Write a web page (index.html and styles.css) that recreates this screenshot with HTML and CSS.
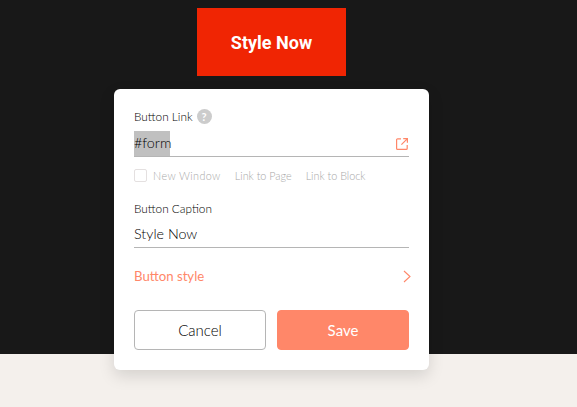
FILE: index.html
```html
<!DOCTYPE html>
<html lang="en">
<head>
    <meta charset="UTF-8">
    <title>Button settings</title>
    <link rel="stylesheet" href="styles.css">
</head>
<body>
    <section class="hero">
        <a class="hero-button">Style Now</a>
    </section>
    <section class="footer-band"></section>

    <div class="popup">
        <div class="label-row">
            <span class="label">Button Link</span>
            <span class="help">?</span>
        </div>
        <div class="field">
            <span class="selected">#form</span>
            <svg class="open-icon" width="12" height="12" viewBox="0 0 12 12" fill="none" stroke="#ff8769" stroke-width="1.2">
                <path d="M5 .8H1.6a1 1 0 0 0-1 1v8.6a1 1 0 0 0 1 1h8.6a1 1 0 0 0 1-1V7"/>
                <path d="M7.2.6h4.2v4.2M11.2.8 5.4 6.6"/>
            </svg>
        </div>
        <div class="options">
            <label class="check"><span class="box"></span>New Window</label>
            <span class="option">Link to Page</span>
            <span class="option">Link to Block</span>
        </div>

        <div class="label caption-label">Button Caption</div>
        <div class="field caption-field">Style Now</div>

        <div class="style-row">
            <span>Button style</span>
            <svg class="chevron" width="8" height="13" viewBox="0 0 8 13" fill="none" stroke="#ff8769" stroke-width="1.1">
                <path d="M1 1l6 5.5L1 12"/>
            </svg>
        </div>

        <div class="actions">
            <button class="btn cancel">Cancel</button>
            <button class="btn save">Save</button>
        </div>
    </div>
</body>
</html>
```

FILE: styles.css
```css
* {
    box-sizing: border-box;
}
body {
    margin: 0;
    height: 407px;
    overflow: hidden;
    position: relative;
    font-family: 'Lato', sans-serif;
    font-weight: 300;
    color: #000;
}
.hero {
    background: #181818;
    height: 354px;
    padding: 8px 0 0 197px;
}
.hero-button {
    width: 149px;
    height: 68px;
    background: #f02503;
    color: #fff;
    font-family: 'Roboto', sans-serif;
    font-weight: 700;
    font-size: 18px;
    display: flex;
    align-items: center;
    justify-content: center;
}
.footer-band {
    background: #f4f0ec;
    height: 53px;
}
.popup {
    position: absolute;
    left: 114px;
    top: 89px;
    width: 315px;
    height: 281px;
    background: #fff;
    border-radius: 6px;
    box-shadow: 0 6px 16px rgba(0, 0, 0, 0.13);
    padding: 20px;
}
.label-row {
    display: flex;
    align-items: center;
    gap: 4px;
    height: 15px;
}
.label {
    font-size: 11.8px;
    line-height: 15px;
}
.help {
    width: 15px;
    height: 15px;
    border-radius: 50%;
    background: #ccc;
    color: #fff;
    font-size: 11px;
    font-weight: 700;
    line-height: 15px;
    text-align: center;
}
.field {
    display: flex;
    justify-content: space-between;
    align-items: center;
    height: 27px;
    margin-top: 6px;
    border-bottom: 1px solid #b5b5b5;
    font-size: 14.3px;
}
.selected {
    background: #c0c0c0;
    align-self: flex-end;
    height: 25px;
    line-height: 23px;
    width: 36px;
}
.open-icon {
    margin: 1px 1px 0 0;
}
.options {
    display: flex;
    align-items: center;
    margin-top: 11px;
    height: 15px;
    font-size: 10.8px;
    color: #a8a8a8;
}
.check {
    display: flex;
    align-items: center;
    gap: 6px;
    letter-spacing: 0.4px;
    margin-right: 14px;
}
.box {
    width: 13px;
    height: 13px;
    border: 1px solid #e4e0e0;
    border-radius: 2px;
}
.option {
    margin-right: 14px;
}
.caption-label {
    margin-top: 18px;
}
.caption-field {
    margin-top: 4px;
    height: 28px;
    padding-bottom: 1px;
}
.style-row {
    display: flex;
    justify-content: space-between;
    align-items: center;
    margin-top: 19px;
    height: 18px;
    color: #ff8769;
    font-size: 13.2px;
    font-weight: 400;
}
.chevron {
    margin-right: -2px;
}
.actions {
    display: flex;
    gap: 11px;
    margin-top: 25px;
}
.btn {
    flex: 1;
    height: 40px;
    border-radius: 4px;
    border: 1px solid;
    font-family: inherit;
    font-weight: 300;
    font-size: 15px;
}
.cancel {
    background: #fff;
    border-color: #b5b5b5;
    color: #000;
}
.save {
    background: #ff8769;
    border-color: #ff8769;
    color: #fff;
    font-weight: 400;
}
```
